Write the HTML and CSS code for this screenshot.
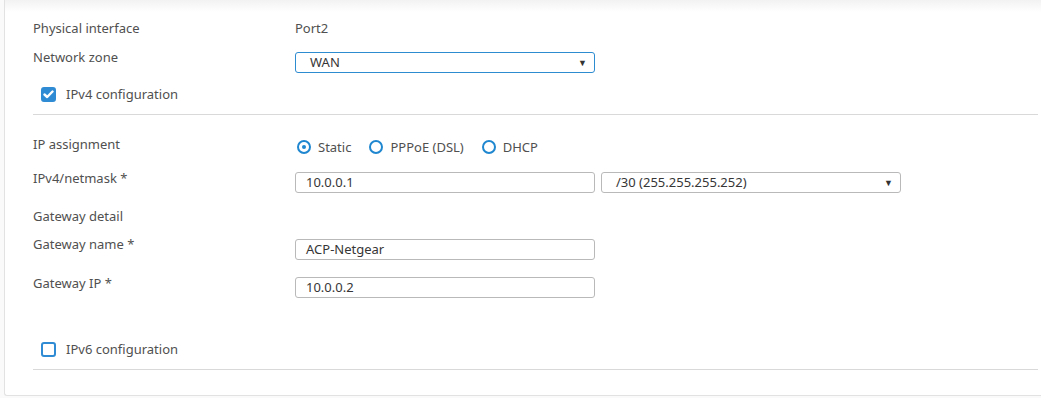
FILE: index.html
```html
<!DOCTYPE html>
<html lang="en">
<head>
    <meta charset="UTF-8">
    <meta name="viewport" content="width=device-width, initial-scale=1.0">
    <title>Interface</title>
    <link rel="stylesheet" href="styles.css">
</head>
<body>

    <div class="panel">
        <div class="row row-phys">
            <span class="label">Physical interface</span>
            <span class="value">Port2</span>
        </div>
        <div class="row row-zone">
            <span class="label">Network zone</span>
            <div class="select focused">WAN<span class="arrow">&#9660;</span></div>
        </div>
        <div class="row row-check">
            <span class="checkbox checked">
                <svg width="11" height="9" viewBox="0 0 11 9"><path d="M1.5 4.5 L4.2 7 L9.5 1.5" fill="none" stroke="#fff" stroke-width="2.4" stroke-linecap="round" stroke-linejoin="round"/></svg>
            </span>
            <span class="check-text">IPv4 configuration</span>
        </div>
        <div class="divider"></div>

        <div class="row row-assign">
            <span class="label">IP assignment</span>
            <div class="radios">
                <span class="radio selected"></span><span class="radio-text">Static</span>
                <span class="radio"></span><span class="radio-text">PPPoE (DSL)</span>
                <span class="radio"></span><span class="radio-text">DHCP</span>
            </div>
        </div>
        <div class="row row-netmask">
            <span class="label">IPv4/netmask *</span>
            <div class="input">10.0.0.1</div>
            <div class="select mask">/30 (255.255.255.252)<span class="arrow">&#9660;</span></div>
        </div>
        <div class="row row-gwdetail">
            <span class="label">Gateway detail</span>
        </div>
        <div class="row row-gwname">
            <span class="label">Gateway name *</span>
            <div class="input">ACP-Netgear</div>
        </div>
        <div class="row row-gwip">
            <span class="label">Gateway IP *</span>
            <div class="input">10.0.0.2</div>
        </div>
        <div class="row row-check">
            <span class="checkbox"></span>
            <span class="check-text">IPv6 configuration</span>
        </div>
        <div class="divider"></div>
    </div>

</body>
</html>
```

FILE: styles.css
```css
body {
    margin: 0;
    background-color: #fafafa;
    font-family: "Noto Sans", Arial, sans-serif;
    font-size: 13px;
    color: #505050;
    overflow: hidden;
}
.panel {
    margin: -1px 0 0 4px;
    padding: 18px 3px 25px 28px;
    background: linear-gradient(#f2f2f2, #ffffff 12px);
    border: 1px solid #e2e2e2;
    border-right: none;
    border-radius: 0 0 0 3px;
}
.row {
    display: flex;
    align-items: flex-start;
}
.label {
    width: 262px;
    flex-shrink: 0;
    line-height: 16px;
    margin-top: 2px;
}
.value {
    line-height: 16px;
    margin-top: 2px;
}
.row-phys { height: 32px; }
.row-zone { height: 31px; }
.row-zone .label { margin-top: -1px; }
.row-zone .select { margin-top: 2px; }
.row-check {
    height: 33px;
    padding-left: 8px;
}
.row-check .checkbox { margin-top: 6px; }
.row-check .check-text { margin-top: 5px; }
.row-assign { height: 34px; margin-top: 19px; }
.row-netmask { height: 39px; }
.row-netmask .input, .row-netmask .select { margin-top: 4px; }
.row-gwdetail { height: 27px; }
.row-gwdetail .label { margin-top: 1px; }
.row-gwname { height: 39px; }
.row-gwname .input { margin-top: 5px; }
.row-gwip { height: 63px; }
.row-gwip .input { margin-top: 4px; }

.divider {
    height: 1px;
    background-color: #d9d9d9;
}
.input, .select {
    box-sizing: border-box;
    width: 300px;
    height: 21px;
    line-height: 19px;
    border: 1px solid #b9b9b9;
    border-radius: 3px;
    padding-left: 10px;
    color: #363636;
    background: #fff;
}
.select {
    position: relative;
    padding-left: 14px;
}
.select.focused {
    border-color: #2d8bd0;
}
.select.mask {
    margin-left: 6px;
}
.arrow {
    position: absolute;
    right: 7px;
    top: 0;
    font-size: 9px;
    color: #333;
}
.checkbox {
    box-sizing: border-box;
    width: 15px;
    height: 15px;
    border: 2px solid #2f8bd3;
    border-radius: 3px;
    background: #fff;
    display: flex;
    align-items: center;
    justify-content: center;
}
.checkbox.checked {
    background: #2f8bd3;
}
.check-text {
    margin-left: 10px;
    line-height: 16px;
}
.radios {
    display: flex;
    align-items: center;
    margin-top: 5px;
    margin-left: 2px;
}
.radio {
    box-sizing: border-box;
    width: 14px;
    height: 14px;
    border: 2px solid #1f87cf;
    border-radius: 50%;
    background: #fff;
    position: relative;
}
.radio.selected::after {
    content: "";
    position: absolute;
    left: 3px;
    top: 3px;
    width: 4px;
    height: 4px;
    border-radius: 50%;
    background: #1f87cf;
}
.radio-text {
    margin-left: 7px;
    margin-right: 18px;
    line-height: 16px;
}
```
